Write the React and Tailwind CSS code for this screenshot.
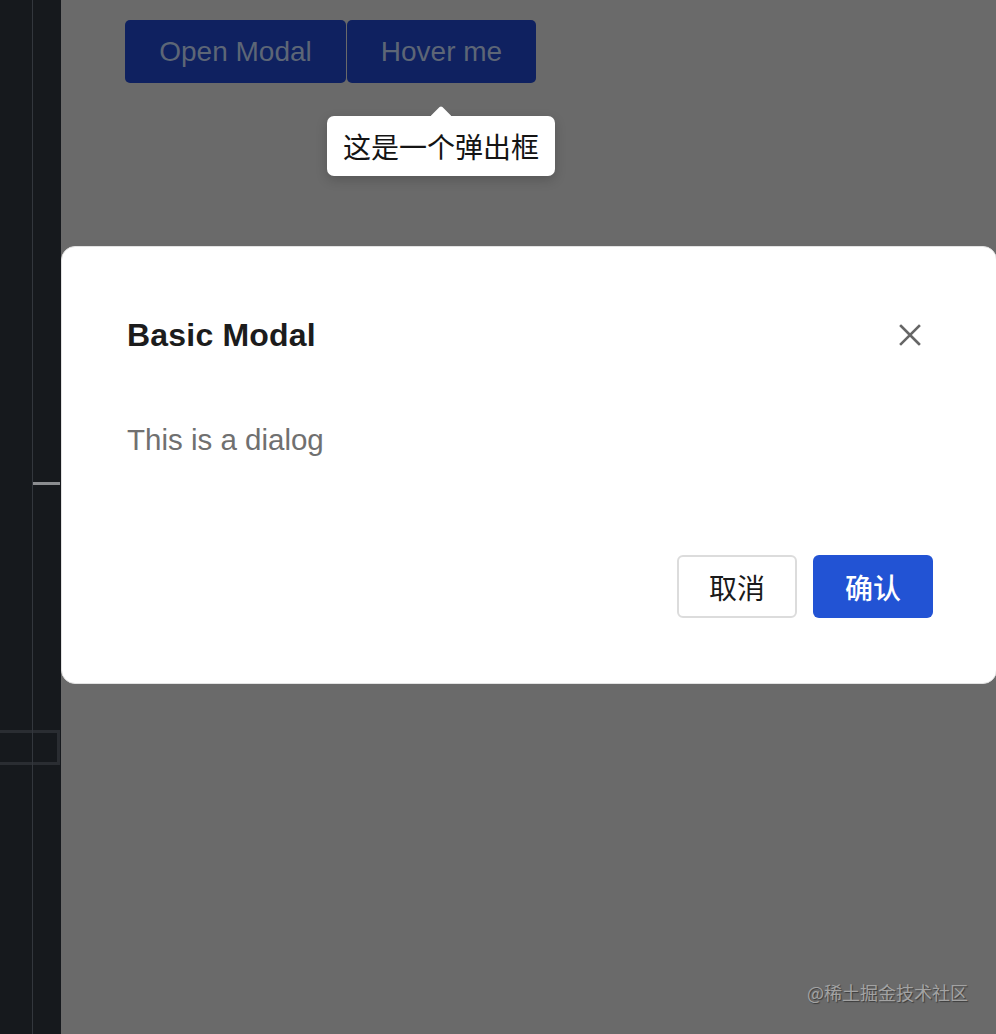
import React from 'react';

const FONT = "font-['Liberation_Sans','Noto_Sans_CJK_SC',sans-serif]";
const CJK = "font-['Noto_Sans_CJK_SC','Liberation_Sans',sans-serif]";

function CloseIcon() {
  return (
    <svg width="22" height="22" viewBox="0 0 22 22" fill="none">
      <path d="M2 2L20 20M20 2L2 20" stroke="#666" strokeWidth="2.6" strokeLinecap="square" />
    </svg>
  );
}

export default function App() {
  return (
    <div className={`w-[996px] h-[1034px] flex overflow-hidden ${FONT}`}>
      {/* editor side strip */}
      <div className="relative w-[61px] shrink-0 bg-[#16191d] flex flex-col">
        <div className="absolute left-[32px] top-0 bottom-0 w-px bg-[#33373d]" />
        <div className="ml-[33px] mt-[482px] w-[27px] h-[3px] bg-[#8b8d90]" />
        <div className="mt-[245px] w-[60px] h-[35px] border-[3px] border-l-0 border-[#2a2d32]" />
      </div>

      {/* page under overlay */}
      <div className="relative flex-1 bg-[#6a6a6a]">
        <div className="flex gap-px pt-[20px] pl-[64px]">
          <button className="w-[221px] h-[63px] rounded-[5px] bg-[#0f2160] text-[#5d6676] text-[28px]">
            Open Modal
          </button>
          <button className="w-[189px] h-[63px] rounded-[5px] bg-[#0f2160] text-[#5d6676] text-[28px]">
            Hover me
          </button>
        </div>

        {/* tooltip */}
        <div className="absolute left-[266px] top-[116px] w-[228px] h-[60px] bg-white rounded-[7px] shadow-[0_4px_12px_rgba(0,0,0,0.18)] flex items-center justify-center">
          <div className="absolute left-1/2 -top-[7px] -ml-[8px] w-[16px] h-[16px] bg-white rotate-45 rounded-[2px]" />
          <span className={`relative text-[28px] leading-none text-[#141414] ${CJK}`}>这是一个弹出框</span>
        </div>

        {/* modal */}
        <div className="absolute left-0 top-[246px] w-[936px] bg-white rounded-[14px] border border-[#e2e2e2] pt-[68px] pl-[65px] pr-[63px] pb-[65px]">
          <div className="flex items-center justify-between h-[40px]">
            <h2 className="text-[32px] leading-[40px] font-bold tracking-[0.2px] text-[#1c1c1c]">Basic Modal</h2>
            <button className="w-[46px] h-[46px] flex items-center justify-center">
              <CloseIcon />
            </button>
          </div>
          <p className="mt-[65px] text-[29.5px] leading-[40px] text-[#707070]">This is a dialog</p>
          <div className="mt-[95px] flex justify-end gap-[16px]">
            <button className={`w-[120px] h-[63px] rounded-[6px] border-2 border-[#dcdcdc] bg-white text-[28px] text-[#1a1a1a] ${CJK}`}>
              取消
            </button>
            <button className={`w-[120px] h-[63px] rounded-[6px] bg-[#2253d4] text-[28px] font-medium text-white ${CJK}`}>
              确认
            </button>
          </div>
        </div>

        {/* watermark */}
        <div className={`absolute right-[28px] bottom-[28px] text-[18px] text-[#a3a3a3] [text-shadow:1px_1px_1px_rgba(0,0,0,0.45)] ${CJK}`}>
          @稀土掘金技术社区
        </div>
      </div>
    </div>
  );
}
